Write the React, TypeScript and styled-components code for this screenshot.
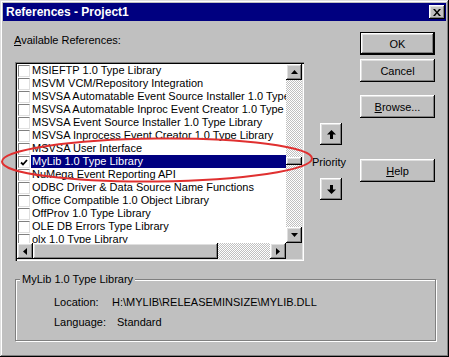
import React from 'react';
import styled, { createGlobalStyle, css } from 'styled-components';

const GlobalStyle = createGlobalStyle`
  html, body {
    margin: 0;
    padding: 0;
    background: #c0c0c0;
  }
  body {
    font-family: "Liberation Sans", Arial, sans-serif;
    font-size: 11px;
    color: #000;
  }
`;

const raised = css`
  background: #c0c0c0;
  box-shadow: inset -1px -1px 0 #000, inset 1px 1px 0 #fff, inset -2px -2px 0 #808080,
    inset 2px 2px 0 #dfdfdf;
`;

const checker = css`
  background: repeating-conic-gradient(#fff 0 25%, #c0c0c0 0 50%) 0 0 / 2px 2px;
`;

const Window = styled.div`
  position: relative;
  width: 449px;
  height: 357px;
  box-sizing: border-box;
  padding: 3px;
  background: #c0c0c0;
  box-shadow: inset -1px -1px 0 #000, inset 1px 1px 0 #dfdfdf, inset -2px -2px 0 #808080,
    inset 2px 2px 0 #fff;
  display: flex;
  flex-direction: column;
`;

const TitleBar = styled.div`
  height: 18px;
  background: #000080;
  display: flex;
  align-items: center;
  justify-content: space-between;
  padding: 0 1px 0 3px;
`;

const Title = styled.span`
  color: #fff;
  font-weight: bold;
  font-size: 12px;
`;

const CloseButton = styled.div`
  ${raised};
  width: 16px;
  height: 14px;
  display: flex;
  align-items: center;
  justify-content: center;
`;

const Body = styled.div`
  padding: 0 10px 0 12px;
  display: flex;
  flex-direction: column;
`;

const TopRow = styled.div`
  display: flex;
`;

const LeftCol = styled.div`
  width: 289px;
  display: flex;
  flex-direction: column;
`;

const Label = styled.div`
  margin-top: 13px;
  margin-left: -1px;
  line-height: 13px;
  height: 13px;
`;

const ListBox = styled.div`
  margin-top: 15px;
  width: 289px;
  height: 199px;
  box-sizing: border-box;
  padding: 2px;
  background: #fff;
  box-shadow: inset 1px 1px 0 #808080, inset 2px 2px 0 #000, inset -1px -1px 0 #fff,
    inset -2px -2px 0 #dfdfdf;
  display: grid;
  grid-template-columns: 1fr 16px;
  grid-template-rows: 1fr 16px;
`;

const Items = styled.div`
  overflow: hidden;
  display: flex;
  flex-direction: column;
`;

const Row = styled.div`
  height: 13px;
  flex: none;
  display: flex;
  align-items: flex-start;
`;

const Check = styled.div`
  width: 12px;
  height: 12px;
  box-sizing: border-box;
  margin: 1px 0 0 1px;
  background: #fff;
  border-top: 1px solid #808080;
  border-left: 1px solid #808080;
  border-right: 1px solid #dfdfdf;
  border-bottom: 1px solid #dfdfdf;
  display: flex;
  align-items: center;
  justify-content: center;
`;

const ItemText = styled.div<{ $selected?: boolean }>`
  flex: 1;
  margin-left: 1px;
  padding-left: 1px;
  height: 13px;
  line-height: 13px;
  white-space: nowrap;
  overflow: hidden;
  background: ${(p) => (p.$selected ? '#000080' : 'transparent')};
  color: ${(p) => (p.$selected ? '#fff' : '#000')};
`;

const VScroll = styled.div`
  display: flex;
  flex-direction: column;
`;

const HScroll = styled.div`
  display: flex;
`;

const ScrollButton = styled.div`
  ${raised};
  width: 16px;
  height: 16px;
  flex: none;
  display: flex;
  align-items: center;
  justify-content: center;
`;

const Track = styled.div`
  ${checker};
  flex: 1;
  display: flex;
`;

const VTrack = styled(Track)`
  flex-direction: column;
`;

const VThumb = styled.div`
  ${raised};
  width: 16px;
  height: 8px;
  flex: none;
`;

const HThumb = styled.div<{ $width: number }>`
  ${raised};
  width: ${(p) => p.$width}px;
  height: 16px;
  flex: none;
`;

const Corner = styled.div`
  background: #c0c0c0;
`;

const PriorityCol = styled.div`
  width: 54px;
  display: flex;
  flex-direction: column;
  align-items: center;
`;

const ArrowButton = styled.div<{ $gap: number }>`
  ${raised};
  width: 22px;
  height: 22px;
  margin-top: ${(p) => p.$gap}px;
  display: flex;
  align-items: center;
  justify-content: center;
`;

const PriorityText = styled.div`
  margin-top: 11px;
  line-height: 13px;
  height: 13px;
  margin-left: -4px;
`;

const ButtonCol = styled.div`
  margin-left: 2px;
  display: flex;
  flex-direction: column;
`;

const PushButton = styled.div<{ $gap: number; $default?: boolean }>`
  ${raised};
  width: 75px;
  height: 23px;
  box-sizing: border-box;
  margin-top: ${(p) => p.$gap}px;
  display: flex;
  align-items: center;
  justify-content: center;
  ${(p) =>
    p.$default &&
    css`
      border: 1px solid #000;
    `}
`;

const Group = styled.fieldset`
  margin: 12px 0 0 0;
  padding: 0;
  width: 421px;
  height: 68px;
  box-sizing: border-box;
  min-width: 0;
  border: 1px solid #808080;
  box-shadow: 1px 1px 0 #fff, inset 1px 1px 0 #fff;
`;

const Legend = styled.legend`
  margin-left: 4px;
  padding: 0 2px;
  line-height: 13px;
  background: #c0c0c0;
`;

const InfoRow = styled.div<{ $gap: number }>`
  display: flex;
  margin: ${(p) => p.$gap}px 0 0 38px;
  line-height: 13px;
  height: 13px;
`;

const InfoLabel = styled.div`
  width: 58px;
`;

const InfoValue = styled.div<{ $shift: number }>`
  margin-left: ${(p) => p.$shift}px;
`;

const Marker = styled.svg`
  position: absolute;
  left: 0;
  top: 0;
  pointer-events: none;
`;

const items = [
  'MSIEFTP 1.0 Type Library',
  'MSVM VCM/Repository Integration',
  'MSVSA Automatable Event Source Installer 1.0 Type Library',
  'MSVSA Automatable Inproc Event Creator 1.0 Type Library',
  'MSVSA Event Source Installer 1.0 Type Library',
  'MSVSA Inprocess Event Creator 1.0 Type Library',
  'MSVSA User Interface',
  'MyLib 1.0 Type Library',
  'NuMega Event Reporting API',
  'ODBC Driver & Data Source Name Functions',
  'Office Compatible 1.0 Object Library',
  'OffProv 1.0 Type Library',
  'OLE DB Errors Type Library',
  'olx 1.0 Type Library',
];

const selected = 7;
const scrollPos = 0.555;
const trackLen = 147;
const thumbLen = 8;

const UpTri = () => (
  <svg width="7" height="4" viewBox="0 0 7 4">
    <polygon points="3.5,0 7,4 0,4" fill="#000" />
  </svg>
);
const DownTri = () => (
  <svg width="7" height="4" viewBox="0 0 7 4">
    <polygon points="0,0 7,0 3.5,4" fill="#000" />
  </svg>
);
const LeftTri = () => (
  <svg width="4" height="7" viewBox="0 0 4 7">
    <polygon points="4,0 4,7 0,3.5" fill="#000" />
  </svg>
);
const RightTri = () => (
  <svg width="4" height="7" viewBox="0 0 4 7">
    <polygon points="0,0 4,3.5 0,7" fill="#000" />
  </svg>
);

const BigArrow = ({ down }: { down?: boolean }) => (
  <svg width="9" height="9" viewBox="0 0 9 9" style={down ? { transform: 'rotate(180deg)' } : undefined}>
    <polygon points="4.5,0 9,4.5 6,4.5 6,9 3,9 3,4.5 0,4.5" fill="#000" />
  </svg>
);

const App = () => {
  return (
    <>
      <GlobalStyle />
      <Window>
        <TitleBar>
          <Title>References - Project1</Title>
          <CloseButton>
            <svg width="8" height="7" viewBox="0 0 8 7">
              <path d="M0 0 L2 0 L4 2.4 L6 0 L8 0 L5 3.5 L8 7 L6 7 L4 4.6 L2 7 L0 7 L3 3.5 Z" fill="#000" />
            </svg>
          </CloseButton>
        </TitleBar>
        <Body>
          <TopRow>
            <LeftCol>
              <Label>
                <u>A</u>vailable References:
              </Label>
              <ListBox>
                <Items>
                  {items.map((name, i) => (
                    <Row key={name}>
                      <Check>
                        {i === selected && (
                          <svg width="8" height="7" viewBox="0 0 8 7">
                            <polyline points="1,3.5 3,5.5 7,1" fill="none" stroke="#000" strokeWidth="1.8" />
                          </svg>
                        )}
                      </Check>
                      <ItemText $selected={i === selected}>{name}</ItemText>
                    </Row>
                  ))}
                </Items>
                <VScroll>
                  <ScrollButton>
                    <UpTri />
                  </ScrollButton>
                  <VTrack>
                    <VThumb style={{ marginTop: Math.round((trackLen - thumbLen) * scrollPos) }} />
                  </VTrack>
                  <ScrollButton>
                    <DownTri />
                  </ScrollButton>
                </VScroll>
                <HScroll>
                  <ScrollButton>
                    <LeftTri />
                  </ScrollButton>
                  <HThumb $width={185} />
                  <Track />
                  <ScrollButton>
                    <RightTri />
                  </ScrollButton>
                </HScroll>
                <Corner />
              </ListBox>
            </LeftCol>
            <PriorityCol>
              <ArrowButton $gap={102}>
                <BigArrow />
              </ArrowButton>
              <PriorityText>Priority</PriorityText>
              <ArrowButton $gap={9}>
                <BigArrow down />
              </ArrowButton>
            </PriorityCol>
            <ButtonCol>
              <PushButton $gap={11} $default>
                OK
              </PushButton>
              <PushButton $gap={4}>Cancel</PushButton>
              <PushButton $gap={13}>
                <span>
                  <u>B</u>rowse...
                </span>
              </PushButton>
              <PushButton $gap={41}>
                <span>
                  <u>H</u>elp
                </span>
              </PushButton>
            </ButtonCol>
          </TopRow>
          <Group>
            <Legend>MyLib 1.0 Type Library</Legend>
            <InfoRow $gap={10}>
              <InfoLabel>Location:</InfoLabel>
              <InfoValue $shift={0}>H:\MYLIB\RELEASEMINSIZE\MYLIB.DLL</InfoValue>
            </InfoRow>
            <InfoRow $gap={7}>
              <InfoLabel>Language:</InfoLabel>
              <InfoValue $shift={5}>Standard</InfoValue>
            </InfoRow>
          </Group>
        </Body>
        <Marker width="449" height="357" viewBox="0 0 449 357">
          <ellipse
            cx="157"
            cy="160"
            rx="155"
            ry="21.5"
            fill="none"
            stroke="#e03030"
            strokeWidth="2"
            transform="rotate(-0.6 157 160)"
          />
        </Marker>
      </Window>
    </>
  );
};

export default App;
